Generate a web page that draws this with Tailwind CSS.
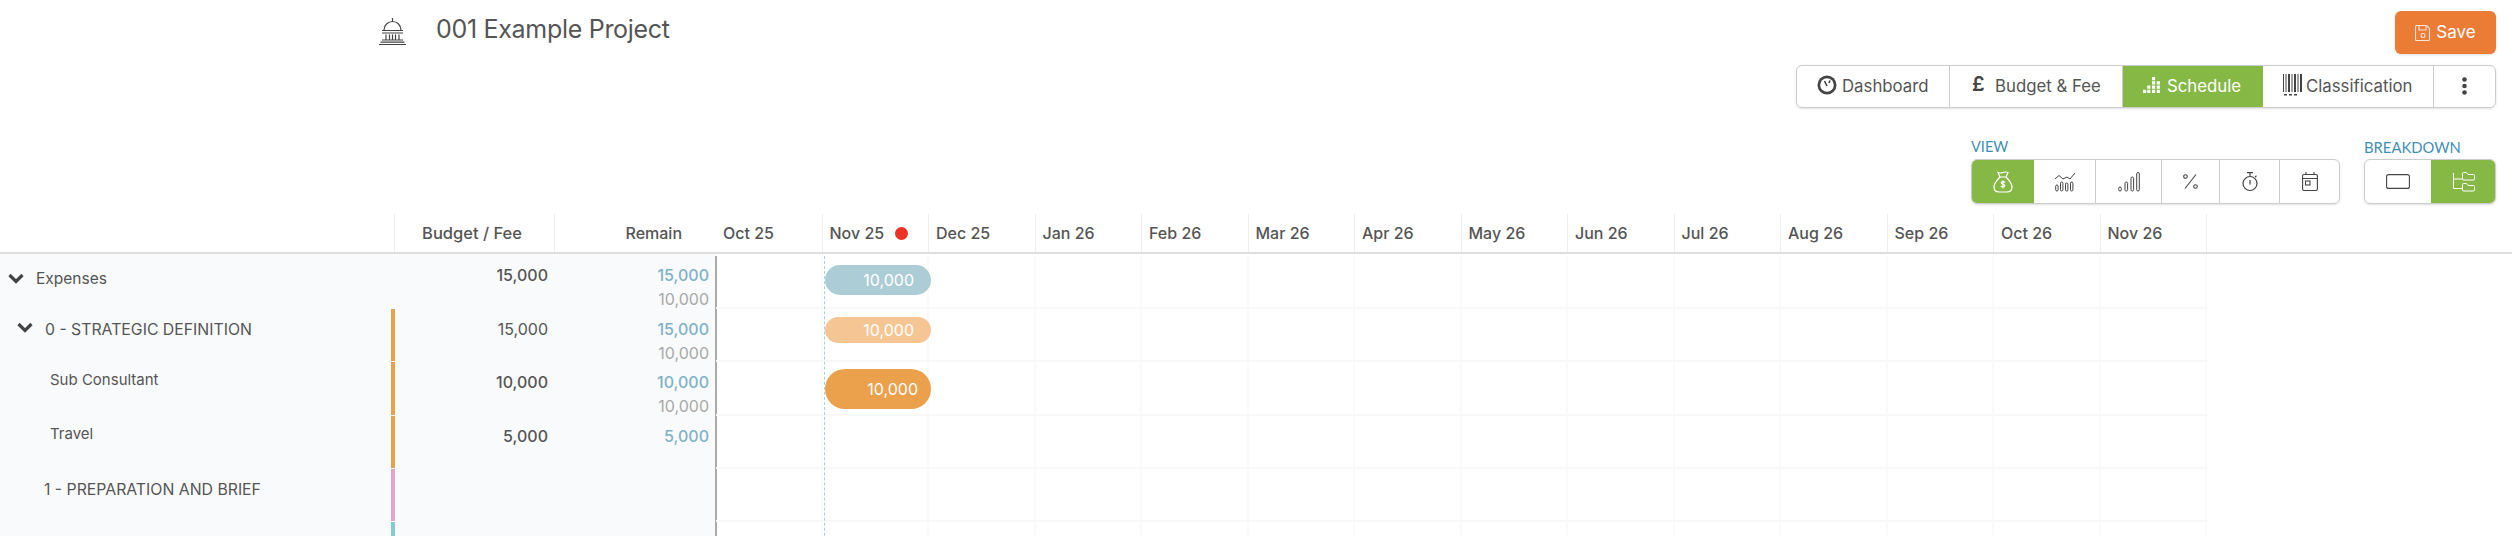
<!DOCTYPE html>
<html lang="en">
<head>
    <meta charset="UTF-8">
    <title>Schedule</title>
    <script src="https://cdn.jsdelivr.net/npm/@tailwindcss/browser@4"></script>
</head>
<body class="bg-white text-[#555] font-['Inter','Liberation_Sans',sans-serif]">
<div class="h-[536px] overflow-hidden">
    <!-- Project title and save -->
    <div class="flex items-start justify-between pl-[379px] pr-4 pt-[11px] h-[65px]">
        <div class="flex items-center h-[37px]">
            <svg class="w-[27px] h-[27px] mt-[3px]" viewBox="0 0 27 27" fill="none" stroke="#444" stroke-width="1.200">
                <path d="M13.500 0v3M5 12a8.500 8.500 0 0 1 17 0M3 12.500h21M3 15h21M7 16.500v5M10.500 16.500v5M13.500 16.500v5M16.500 16.500v5M20 16.500v5M3 22h21M1.500 24.200h24M0 26.500h27"/>
            </svg>
            <h1 class="ml-[30px] text-[25px] leading-none tracking-[-0.3px] text-[#555] font-normal">001 Example Project</h1>
        </div>
        <button class="flex items-center justify-center w-[101px] h-[43px] rounded-[6px] bg-[#eb7c35] text-white text-[17px] shadow-sm">
            <svg class="w-4 h-4 mr-[5px]" viewBox="0 0 16 16" fill="none" stroke="#fff" stroke-opacity=".8" stroke-width="1.100">
                <path d="M1.500.5h10l3 3v11a1 1 0 0 1-1 1h-12a1 1 0 0 1-1-1v-13a1 1 0 0 1 1-1zM4 .5v4.500h7V.5"/><circle cx="8" cy="10.500" r="2"/>
            </svg>
            Save
        </button>
    </div>

    <!-- Tabs -->
    <div class="flex justify-end pr-4">
        <div class="flex h-[43px] w-[700px] rounded-[6px] border border-[#ccc] shadow-sm overflow-hidden text-[16.800px] text-[#555]">
            <div class="flex items-center w-[153px] pl-[20px] border-r border-[#ccc]">
                <svg class="w-[20px] h-[20px] mr-[5px] mb-[3px]" viewBox="0 0 20 20"><circle cx="10" cy="10" r="9.500" fill="#444"/><circle cx="10" cy="10" r="6.800" fill="#fff"/><path d="M10 11l-2.500-5M12 8l1-2.500" stroke="#444" stroke-width="1.600"/></svg>
                Dashboard
            </div>
            <div class="flex items-center w-[173px] pl-[22px] border-r border-[#ccc]">
                <span class="w-[23px] mb-[5px] text-[20px] leading-none font-semibold text-[#444]">£</span>
                Budget &amp; Fee
            </div>
            <div class="flex items-center w-[140px] pl-[20px] bg-[#86b846] text-white">
                <svg class="w-[19px] h-[19px] mr-[5px] mb-[2px]" viewBox="0 0 18 18" fill="#fff"><path d="M8.500 1h3v3h-3zM8.500 5h3v3h-3zM8.500 9h3v3h-3zM8.500 13h3v3h-3zM13 5h3v3h-3zM13 9h3v3h-3zM13 13h3v3h-3zM4 9h3v3H4zM4 13h3v3H4zM0 13h3v3H0z"/></svg>
                Schedule
            </div>
            <div class="flex items-center w-[171px] pl-[20px] border-r border-[#ccc]">
                <svg class="w-[19px] h-[22px] mr-[4px] mb-[3px]" viewBox="0 0 19 22" fill="#444"><path d="M0 0h1v18H0zM2.500 0h1v18h-1zM5 0h2v18H5zM8.500 0h1v18h-1zM11 0h2v18h-2zM14.500 0h1v18h-1zM17 0h2v18h-2zM1 20h3v1.500H1zM6 20h3v1.500H6zM11 20h3v1.500h-3z"/></svg>
                Classification
            </div>
            <div class="flex flex-1 items-center justify-center">
                <svg class="w-[5px] h-[18px] mb-[2px]" viewBox="0 0 5 18" fill="#444"><circle cx="2.500" cy="2.500" r="2.300"/><circle cx="2.500" cy="9" r="2.300"/><circle cx="2.500" cy="15.500" r="2.300"/></svg>
            </div>
        </div>
    </div>

    <!-- View and breakdown toggles -->
    <div class="flex justify-end pr-4 mt-[29px] gap-[24px]">
        <div class="w-[369px]">
            <div class="text-[14.500px] leading-[20px] mb-[2px] text-[#3f8fb5] font-['Lato']">VIEW</div>
            <div class="flex h-[45px] rounded-[6px] border border-[#ccc] shadow-sm overflow-hidden">
                <div class="flex items-center justify-center w-[63px] -ml-px -my-px bg-[#86b846]">
                    <svg class="w-[20px] h-[22px]" viewBox="0 0 20 22" fill="none" stroke="#fff" stroke-width="1.200"><path d="M7 6 5 1.500c2 .8 3 .8 5 0s3-.8 5 0L13 6M7 6h6M7 6C4 9 1 13 1 16c0 3.500 2 5 5 5h8c3 0 5-1.500 5-5 0-3-3-7-6-10"/><path d="M12 11.500c-.5-1-3.500-1.500-3.800.3-.2 1.700 3.800 1 3.600 2.900-.2 1.600-3.200 1.500-4 .3M10 9.500v8"/></svg>
                </div>
                <div class="flex items-center justify-center w-[62px] border-r border-[#ccc]">
                    <svg class="w-[20px] h-[20px]" viewBox="0 0 20 20" fill="none" stroke="#444" stroke-width="1"><path d="M0 7 4 3.500l4 3.500 4-2 3 2L20 1"/><rect x=".7" y="13" width="2.400" height="6" rx="1.200"/><rect x="5.500" y="10" width="2.400" height="9" rx="1.200"/><rect x="10.500" y="11" width="2.400" height="8" rx="1.200"/><rect x="15.500" y="10" width="2.400" height="9" rx="1.200"/></svg>
                </div>
                <div class="flex items-center justify-center w-[66px] border-r border-[#ccc]">
                    <svg class="w-[22px] h-[20px]" viewBox="0 0 22 20" fill="none" stroke="#444" stroke-width="1"><rect x=".7" y="15" width="2.600" height="4" rx="1.300"/><rect x="7" y="10" width="2.600" height="9" rx="1.300"/><rect x="13" y="5" width="2.600" height="14" rx="1.300"/><rect x="18.700" y=".5" width="2.600" height="18.500" rx="1.300"/></svg>
                </div>
                <div class="flex items-center justify-center w-[58px] border-r border-[#ccc]">
                    <svg class="w-[15px] h-[15px]" viewBox="0 0 15 15" fill="none" stroke="#444" stroke-width="1.100"><path d="M13 .5 2 14.500"/><circle cx="2.500" cy="2.500" r="1.800"/><circle cx="12.500" cy="12.500" r="1.800"/></svg>
                </div>
                <div class="flex items-center justify-center w-[60px] border-r border-[#ccc]">
                    <svg class="w-[16px] h-[20px]" viewBox="0 0 16 20" fill="none" stroke="#444" stroke-width="1.200"><circle cx="8" cy="11.500" r="7"/><path d="M5 .7h6M8 1v3.500M8 8v4.500M13 5l1.500-1.200"/></svg>
                </div>
                <div class="flex flex-1 items-center justify-center">
                    <svg class="w-[16px] h-[19px]" viewBox="0 0 16 19" fill="none" stroke="#444" stroke-width="1.100"><rect x=".6" y="2.500" width="14.800" height="16" rx="1.500"/><path d="M.6 6.500h14.800M4 0v3M12 0v3"/><rect x="3.500" y="9" width="4.500" height="4"/></svg>
                </div>
            </div>
        </div>
        <div class="w-[132px]">
            <div class="text-[14.800px] leading-[20px] mb-[2px] text-[#3f8fb5] font-['Lato'] whitespace-nowrap">BREAKDOWN</div>
            <div class="flex h-[45px] rounded-[6px] border border-[#ccc] shadow-sm overflow-hidden">
                <div class="flex items-center justify-center w-[66px]">
                    <svg class="w-[24px] h-[15px]" viewBox="0 0 24 15" fill="none" stroke="#444" stroke-width="1.100"><rect x=".6" y=".6" width="22.800" height="13.800" rx="2"/></svg>
                </div>
                <div class="flex flex-1 items-center justify-center -my-px -mr-px bg-[#86b846]">
                    <svg class="w-[22px] h-[20px]" viewBox="0 0 22 20" fill="none" stroke="#fff" stroke-width="1"><path d="M.5 1v15.500H9M.5 7H9"/><path d="M9.500 3V1.500a1 1 0 0 1 1-1h3l1.500 2h5.500a1 1 0 0 1 1 1V7a1 1 0 0 1-1 1h-10a1 1 0 0 1-1-1zM9.500 14v-1.500a1 1 0 0 1 1-1h3l1.500 2h5.500a1 1 0 0 1 1 1V18a1 1 0 0 1-1 1h-10a1 1 0 0 1-1-1z"/></svg>
                </div>
            </div>
        </div>
    </div>

    <!-- Column headers -->
    <div class="flex h-[40px] mt-[10px] border-b-2 border-[#ddd] text-[16px] font-medium">
        <div class="w-[395px] border-r border-[#eee]"></div>
        <div class="flex items-center justify-end w-[160px] pr-[32px] border-r border-[#eee] text-[16.500px]">Budget / Fee</div>
        <div class="flex items-center justify-end w-[127px]">Remain</div>
        <div class="w-[34px]"></div>
        <div id="months" class="flex flex-1"></div>
    </div>

    <!-- Rows -->
    <div id="rows"></div>
</div>

<script>
    const months = ['Oct 25','Nov 25','Dec 25','Jan 26','Feb 26','Mar 26','Apr 26','May 26','Jun 26','Jul 26','Aug 26','Sep 26','Oct 26','Nov 26'];

    // Month header cells
    let head = '';
    months.forEach((m, i) => {
        const dot = i === 1 ? '<span class="ml-[11px] w-[13px] h-[13px] rounded-full bg-[#ee3124]"></span>' : '';
        head += `<div class="flex items-center w-[106.500px] pl-[7px] border-r border-[#eee] whitespace-nowrap">${m}${dot}</div>`;
    });
    document.getElementById('months').innerHTML = head;

    const rows = [
        { h: 'h-[55px]', name: 'Expenses', pad: 'pt-[13px] pl-[36px]', text: 'text-[15.500px]', chev: 'left-[8px] top-[19px]', bar: '', budget: '15,000', bw: 'font-medium', remain: '15,000', rw: 'font-medium', sub: '10,000', pill: ['bg-[#acccd6]', 'mt-[9px] h-[30px]', 'pr-[17px]'] },
        { h: 'h-[53.330px]', name: '0 - STRATEGIC DEFINITION', pad: 'pt-[9px] pl-[45px]', text: 'text-[15.800px]', chev: 'left-[17px] top-[13px]', bar: 'bg-[#eba04b]', budget: '15,000', bw: 'font-normal', remain: '15,000', rw: 'font-medium', sub: '10,000', pill: ['bg-[#f5c694]', 'mt-[8px] h-[26px]', 'pr-[17px]'] },
        { h: 'h-[53.330px]', name: 'Sub Consultant', pad: 'pt-[6px] pl-[50px]', text: 'text-[15px]', chev: '', bar: 'bg-[#eba04b]', budget: '10,000', bw: 'font-medium', remain: '10,000', rw: 'font-medium', sub: '10,000', pill: ['bg-[#eba04b]', 'mt-[7px] h-[40px]', 'pr-[13px]'] },
        { h: 'h-[53.330px]', name: 'Travel', pad: 'pt-[6px] pl-[50px]', text: 'text-[15px]', chev: '', bar: 'bg-[#eba04b]', budget: '5,000', bw: 'font-medium', remain: '5,000', rw: 'font-medium', sub: '', pill: null },
        { h: 'h-[53.330px]', name: '1 - PREPARATION AND BRIEF', pad: 'pt-[9px] pl-[44px]', text: 'text-[15.800px]', chev: '', bar: 'bg-[#e4a5c8]', budget: '', bw: '', remain: '', rw: '', sub: '', pill: null },
        { h: 'h-[53.330px]', name: '2 - CONCEPT DESIGN', pad: 'pt-[9px] pl-[44px]', text: 'text-[15.800px]', chev: '', bar: 'bg-[#85cbd1]', budget: '', bw: '', remain: '', rw: '', sub: '', pill: null },
    ];

    const chevron = (pos) => `<svg class="absolute ${pos} w-[16px] h-[11px]" viewBox="0 0 16 11" fill="none" stroke="#444" stroke-width="3.200"><path d="M1.500 2 8 8.500 14.500 2"/></svg>`;

    let html = '';
    rows.forEach((r, i) => {
        let cells = '';
        months.forEach((m, c) => {
            let inner = '';
            if (c === 1 && r.pill) {
                inner = `<div class="relative z-10 flex items-center justify-end w-[106px] ml-[2.500px] rounded-full text-white text-[16px] font-normal ${r.pill[0]} ${r.pill[1]} ${r.pill[2]}">10,000</div>`;
            }
            cells += `<div class="w-[106.500px] border-r-2 border-[#fafafa]">${inner}</div>`;
        });
        html += `
        <div class="flex ${r.h}">
            <div class="relative w-[391px] bg-[#f9fafb] ${r.pad} ${r.text} leading-[24px] whitespace-nowrap">
                ${r.chev ? chevron(r.chev) : ''}${r.name}
            </div>
            <div class="w-[4px] bg-[#f9fafb] ${i === 0 ? '' : 'border-b border-white'}"><div class="h-full ${r.bar}"></div></div>
            <div class="w-[160px] bg-[#f9fafb] pr-[7px] text-right text-[16px] leading-[24px] ${i === 0 ? 'pt-[9px]' : 'pt-[8px]'} ${r.bw}">${r.budget}</div>
            <div class="w-[160px] bg-[#f9fafb] pr-[6px] text-right text-[16px] leading-[24px] ${i === 0 ? 'pt-[9px]' : 'pt-[8px]'}">
                <div class="text-[#7fb2c6] ${r.rw}">${r.remain}</div>
                <div class="text-[#a8a8a8]">${r.sub}</div>
            </div>
            <div class="flex flex-1 border-l-2 border-[#aaa] ${i === 0 ? 'mt-[2px]' : ''}">
                <div class="flex w-[1492px] -ml-px border-b-2 border-[#f8f8f8]">${cells}</div>
            </div>
        </div>`;
    });
    document.getElementById('rows').innerHTML = `<div class="relative">${html}<div class="absolute left-[824px] top-[2px] bottom-0 border-l border-dashed border-[#a9d0e0]"></div></div>`;
</script>
</body>
</html>
